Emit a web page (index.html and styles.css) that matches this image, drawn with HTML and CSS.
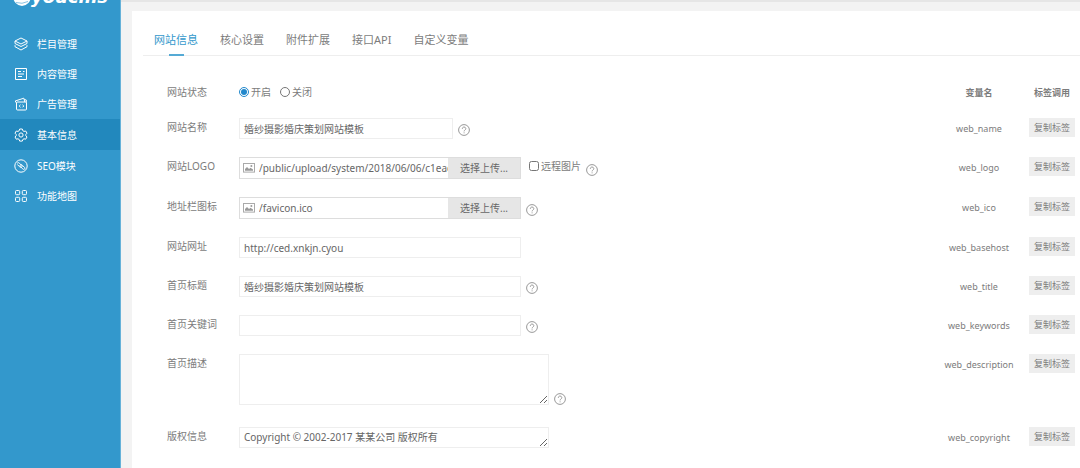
FILE: index.html
```html
<!DOCTYPE html>
<html lang="zh-CN">
<head>
<meta charset="utf-8">
<title>基本信息</title>
<link rel="stylesheet" href="styles.css">
</head>
<body>
<svg class="defs" width="0" height="0" aria-hidden="true">
  <symbol id="help" viewBox="0 0 12 12"><circle cx="6" cy="6" r="5.4"/><path d="M4.3 4.8C4.3 2.4 7.8 2.5 7.8 4.7C7.8 6 6.1 6 6.1 7.4M6.1 8.4V9.3"/></symbol>
  <symbol id="picture" viewBox="0 0 12 10"><rect x=".5" y=".5" width="11" height="8.6"/><path class="fill" d="M2 7.8V6L4 4l2 2 1.5-1.2L10 6.6v1.2z"/><circle class="fill" cx="8.4" cy="3" r="1"/></symbol>
</svg>
<div class="page">
  <aside class="sidebar">
    <div class="logo"><svg width="18" height="24" viewBox="0 0 18 24"><ellipse cx="9" cy="12" rx="9" ry="10" fill="#fff"/><path d="M3 18.5q6 2 12-1" fill="none" stroke="#8cc4e2" stroke-width="1"/></svg><span>youcms</span></div>
    <nav class="menu">
      <a href="#"><svg class="icon" viewBox="0 0 14 14"><path d="M7 1l6 3-6 3-6-3zM1 4v2.5l6 3 6-3V4M1 8.2v1.5l6 3.3 6-3.3V8.2"/></svg>栏目管理</a>
      <a href="#"><svg class="icon" viewBox="0 0 14 14"><path d="M1.5 1.5h11v11h-11zM4 4.5h3M4 7h6M4 9.5h4M9 4.5h1.5"/></svg>内容管理</a>
      <a href="#"><svg class="icon" viewBox="0 0 14 14"><rect x="2.5" y="5" width="10" height="8" rx="1"/><path d="M2.5 6L1.2 4 9.8 1.2l1 3.8M10.3 2.5l2 .5v2.5M6.5 7.8L5.2 9l1.3 1.3M8.5 7.8L9.8 9l-1.3 1.3"/></svg>广告管理</a>
      <a href="#" class="active"><svg class="icon" viewBox="0 0 14 14"><path d="M5.7 1h2.6l.5 1.7 1.2.7 1.7-.4 1.3 2.2L11.8 6.5v1.2L13 9l-1.3 2.2-1.7-.4-1.2.7-.5 1.6H5.7l-.5-1.6-1.2-.7-1.7.4L1 9l1.2-1.3V6.4L1 5.2 2.3 3l1.7.4 1.2-.7z"/><circle cx="7" cy="7" r="2.1"/></svg>基本信息</a>
      <a href="#"><svg class="icon" viewBox="0 0 14 14"><circle cx="7" cy="7" r="6.2"/><path d="M3.2 4.2q1-1.2 2.2 0l2.2 2.2q1 1.3 0 1.8T5.4 7.6L3.4 5.5M10.8 9.8q-1 1.2-2.2 0L6.5 7.6q-1-1.2 0-1.8t2 .6l2.2 2.2q.6.6.1 1.2"/></svg>SEO模块</a>
      <a href="#"><svg class="icon" viewBox="0 0 14 14"><rect x="1.5" y="1.5" width="4.2" height="4.2" rx="1"/><rect x="8.3" y="1.5" width="4.2" height="4.2" rx="1"/><rect x="1.5" y="8.3" width="4.2" height="4.2" rx="1"/><rect x="8.3" y="8.3" width="4.2" height="4.2" rx="1"/></svg>功能地图</a>
    </nav>
  </aside>
  <div class="main">
    <div class="topbar"></div>
    <main class="card">
      <nav class="tabs">
        <a href="#" class="current">网站信息</a><a href="#">核心设置</a><a href="#">附件扩展</a><a href="#">接口API</a><a href="#">自定义变量</a>
      </nav>
      <form class="form">
        <div class="row head">
          <span class="label">网站状态</span>
          <div class="field choices">
            <label><input type="radio" name="status" checked>开启</label>
            <label><input type="radio" name="status">关闭</label>
          </div>
          <b class="var">变量名</b><b class="call">标签调用</b>
        </div>
        <div class="row">
          <label class="label" for="name">网站名称</label>
          <div class="field"><input class="text short" id="name" type="text" value="婚纱摄影婚庆策划网站模板"><svg class="help"><use href="#help"/></svg></div>
          <span class="var">web_name</span><button class="copy" type="button">复制标签</button>
        </div>
        <div class="row">
          <label class="label" for="weblogo">网站LOGO</label>
          <div class="field"><div class="upload"><svg class="picture"><use href="#picture"/></svg><input id="weblogo" type="text" value="/public/upload/system/2018/06/06/c1eacc4f.png"><button type="button">选择上传...</button></div><label class="remote"><input type="checkbox">远程图片</label><svg class="help"><use href="#help"/></svg></div>
          <span class="var">web_logo</span><button class="copy" type="button">复制标签</button>
        </div>
        <div class="row">
          <label class="label" for="ico">地址栏图标</label>
          <div class="field"><div class="upload"><svg class="picture"><use href="#picture"/></svg><input id="ico" type="text" value="/favicon.ico"><button type="button">选择上传...</button></div><svg class="help"><use href="#help"/></svg></div>
          <span class="var">web_ico</span><button class="copy" type="button">复制标签</button>
        </div>
        <div class="row">
          <label class="label" for="host">网站网址</label>
          <div class="field"><input class="text" id="host" type="text" value="http://ced.xnkjn.cyou"></div>
          <span class="var">web_basehost</span><button class="copy" type="button">复制标签</button>
        </div>
        <div class="row">
          <label class="label" for="title">首页标题</label>
          <div class="field"><input class="text" id="title" type="text" value="婚纱摄影婚庆策划网站模板"><svg class="help"><use href="#help"/></svg></div>
          <span class="var">web_title</span><button class="copy" type="button">复制标签</button>
        </div>
        <div class="row">
          <label class="label" for="keywords">首页关键词</label>
          <div class="field"><input class="text" id="keywords" type="text"><svg class="help"><use href="#help"/></svg></div>
          <span class="var">web_keywords</span><button class="copy" type="button">复制标签</button>
        </div>
        <div class="row tall">
          <label class="label" for="desc">首页描述</label>
          <div class="field"><textarea class="area" id="desc"></textarea><svg class="help"><use href="#help"/></svg></div>
          <span class="var">web_description</span><button class="copy" type="button">复制标签</button>
        </div>
        <div class="row">
          <label class="label" for="copyright">版权信息</label>
          <div class="field"><textarea class="area line" id="copyright">Copyright © 2002-2017 某某公司 版权所有</textarea></div>
          <span class="var">web_copyright</span><button class="copy" type="button">复制标签</button>
        </div>
      </form>
    </main>
  </div>
</div>
</body>
</html>
```
FILE: styles.css
```css
* { box-sizing: border-box; }
body {
  margin: 0;
  background: #f3f3f3;
  color: #7c7c7c;
  font: 10px/18px "Noto Sans", "Noto Sans CJK SC", sans-serif;
}
a { color: inherit; text-decoration: none; }
input, textarea, button { font: inherit; color: inherit; margin: 0; }
.defs { display: block; position: absolute; }
.page { display: flex; min-height: 100vh; }

.sidebar {
  flex: 0 0 121px;
  background: #3398cc;
  border-right: 1px solid #66b2d9;
  color: #fff;
}
.logo {
  display: flex;
  align-items: flex-end;
  height: 8px;
  margin-bottom: 21px;
  padding-left: 13px;
  overflow: hidden;
  font: italic bold 18px/22px "DejaVu Sans", sans-serif;
}
.menu a {
  display: flex;
  align-items: center;
  gap: 9px;
  height: 30px;
  padding-left: 14px;
}
.menu .active { height: 31px; margin-bottom: 1px; background: #2288bd; }
.icon {
  width: 14px;
  height: 14px;
  fill: none;
  stroke: #fff;
  stroke-width: 1;
}

.main { flex: 1; min-width: 0; display: flex; flex-direction: column; }
.topbar { height: 2px; margin-bottom: 9px; background: #e6e6e6; }
.card { flex: 1; margin-left: 11px; padding-left: 11px; background: #fff; }
.tabs {
  display: flex;
  gap: 22px;
  height: 45px;
  padding: 20px 11px 0;
  border-bottom: 1px solid #eee;
  font-size: 11px;
}
.tabs a { height: 25px; }
.tabs .current { color: #3398cc; }
.tabs .current::after {
  content: "";
  display: block;
  width: 15px;
  height: 2px;
  margin: 5px auto 0;
  background: #55aad5;
}

.form { padding: 26px 5px 0 24px; }
.row {
  display: grid;
  grid-template-columns: 72px 1fr 100px 46px;
  align-items: start;
  padding-bottom: 18px;
}
.head { padding-bottom: 15px; line-height: 20px; }
.tall { padding-bottom: 22px; }
.field { display: flex; align-items: flex-end; gap: 5px; }
.var { text-align: center; font-size: 9px; line-height: 21px; }
.head b { font-size: 9px; text-align: center; line-height: 21px; }
.choices { gap: 9px; }
.choices label, .remote { display: flex; align-items: center; gap: 2px; }
.choices input { width: 10px; height: 10px; accent-color: #2288cc; }
.remote { align-self: flex-start; margin-left: 3px; }
.remote input { width: 10px; height: 10px; }

.text, .area {
  width: 282px;
  height: 21px;
  padding: 0 4px;
  border: 1px solid #eee;
  background: #fff;
  color: #666;
}
.short { width: 214px; }
.area { display: block; width: 310px; height: 51px; line-height: 18px; resize: both; }
.line { height: 21px; overflow: hidden; }
.upload {
  display: flex;
  align-items: center;
  width: 282px;
  height: 22px;
  border: 1px solid #ddd;
  color: #666;
}
.upload input {
  flex: 1;
  min-width: 0;
  height: 20px;
  padding: 0 0 0 4px;
  border: 0;
  background: none;
}
.upload button {
  width: 72px;
  height: 20px;
  padding: 0;
  border: 0;
  background: #e6e6e6;
}
.picture { width: 12px; height: 10px; margin-left: 3px; fill: none; stroke: #aaa; }
.fill { fill: #999; stroke: none; }
.help { width: 12px; height: 12px; margin-bottom: 3px; fill: none; stroke: #999; stroke-width: 1; }
.tall .help { margin-bottom: 0; }
.copy {
  height: 19px;
  padding: 0;
  border: 0;
  background: #eee;
  font-size: 9px;
}
```
